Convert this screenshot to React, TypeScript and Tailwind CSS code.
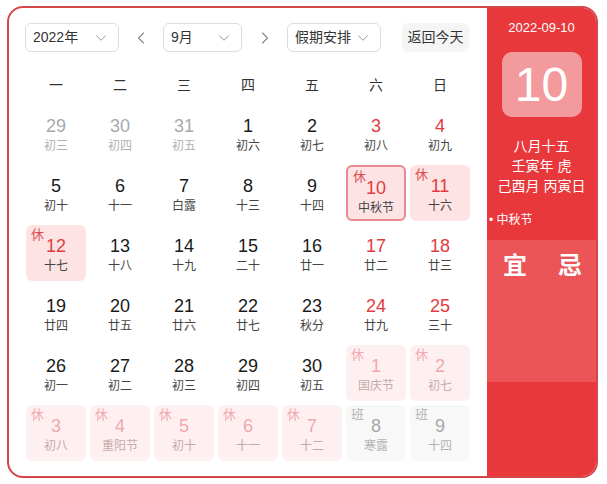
import { ChevronDown, ChevronLeft, ChevronRight } from "lucide-react";

type Kind = "normal" | "prev" | "weekend" | "rest" | "restNext" | "work";

type Day = { n: number; lunar: string; kind: Kind; selected?: boolean };

const WEEK = ["一", "二", "三", "四", "五", "六", "日"];

const DAYS: Day[] = [
  { n: 29, lunar: "初三", kind: "prev" },
  { n: 30, lunar: "初四", kind: "prev" },
  { n: 31, lunar: "初五", kind: "prev" },
  { n: 1, lunar: "初六", kind: "normal" },
  { n: 2, lunar: "初七", kind: "normal" },
  { n: 3, lunar: "初八", kind: "weekend" },
  { n: 4, lunar: "初九", kind: "weekend" },

  { n: 5, lunar: "初十", kind: "normal" },
  { n: 6, lunar: "十一", kind: "normal" },
  { n: 7, lunar: "白露", kind: "normal" },
  { n: 8, lunar: "十三", kind: "normal" },
  { n: 9, lunar: "十四", kind: "normal" },
  { n: 10, lunar: "中秋节", kind: "rest", selected: true },
  { n: 11, lunar: "十六", kind: "rest" },

  { n: 12, lunar: "十七", kind: "rest" },
  { n: 13, lunar: "十八", kind: "normal" },
  { n: 14, lunar: "十九", kind: "normal" },
  { n: 15, lunar: "二十", kind: "normal" },
  { n: 16, lunar: "廿一", kind: "normal" },
  { n: 17, lunar: "廿二", kind: "weekend" },
  { n: 18, lunar: "廿三", kind: "weekend" },

  { n: 19, lunar: "廿四", kind: "normal" },
  { n: 20, lunar: "廿五", kind: "normal" },
  { n: 21, lunar: "廿六", kind: "normal" },
  { n: 22, lunar: "廿七", kind: "normal" },
  { n: 23, lunar: "秋分", kind: "normal" },
  { n: 24, lunar: "廿九", kind: "weekend" },
  { n: 25, lunar: "三十", kind: "weekend" },

  { n: 26, lunar: "初一", kind: "normal" },
  { n: 27, lunar: "初二", kind: "normal" },
  { n: 28, lunar: "初三", kind: "normal" },
  { n: 29, lunar: "初四", kind: "normal" },
  { n: 30, lunar: "初五", kind: "normal" },
  { n: 1, lunar: "国庆节", kind: "restNext" },
  { n: 2, lunar: "初七", kind: "restNext" },

  { n: 3, lunar: "初八", kind: "restNext" },
  { n: 4, lunar: "重阳节", kind: "restNext" },
  { n: 5, lunar: "初十", kind: "restNext" },
  { n: 6, lunar: "十一", kind: "restNext" },
  { n: 7, lunar: "十二", kind: "restNext" },
  { n: 8, lunar: "寒露", kind: "work" },
  { n: 9, lunar: "十四", kind: "work" },
];

function Select({ label, width }: { label: string; width: string }) {
  return (
    <div className={`flex h-[29px] ${width} items-center justify-between rounded-md border border-[#dcdcdc] bg-white pl-[7px] pr-[8px] text-[14px] text-[#333]`}>
      <span>{label}</span>
      <ChevronDown size={18} strokeWidth={1.2} className="text-[#888]" />
    </div>
  );
}

function Cell({ d }: { d: Day }) {
  let box = "";
  let num = "text-[#1a1a1a]";
  let lunar = "text-[#444]";
  let badge: string | null = null;
  let badgeColor = "";

  if (d.kind === "prev") {
    num = "text-[#aaa]";
    lunar = "text-[#b0b0b0]";
  } else if (d.kind === "weekend") {
    num = "text-[#e23b3f]";
  } else if (d.kind === "rest") {
    box = d.selected ? "bg-[#fde3e4] border-2 border-[#e7898d]" : "bg-[#fde3e4]";
    num = "text-[#e23b3f]";
    badge = "休";
    badgeColor = "text-[#e0474b]";
  } else if (d.kind === "restNext") {
    box = "bg-[#fef0f1]";
    num = "text-[#f2a7ad]";
    lunar = "text-[#c6a9ab]";
    badge = "休";
    badgeColor = "text-[#f2a7ad]";
  } else if (d.kind === "work") {
    box = "bg-[#f8f8f8]";
    num = "text-[#a8a8a8]";
    lunar = "text-[#b4b4b4]";
    badge = "班";
    badgeColor = "text-[#b4b4b4]";
  }

  return (
    <div className={`relative flex h-[56px] flex-col items-center rounded-md ${box}`}>
      {badge && (
        <span className={`absolute left-[5px] top-[3px] text-[13px] leading-none ${badgeColor}`}>{badge}</span>
      )}
      <span className={`mt-[10px] text-[18px] leading-[22px] ${num}`}>{d.n}</span>
      <span className={`mt-[1px] text-[12px] leading-[16px] ${lunar}`}>{d.lunar}</span>
    </div>
  );
}

export default function App() {
  return (
    <div
      className="w-[607px] h-[484px] bg-white pl-[7px] pt-[6px]"
      style={{ fontFamily: '"Liberation Sans", "Noto Sans CJK SC", sans-serif' }}
    >
      <div className="flex h-[472px] w-[591px] overflow-hidden rounded-[16px] border-2 border-[#d6474a]">
        <div className="w-[478px] pt-[15px]">
          <div className="flex items-center pl-[16px]">
            <Select label="2022年" width="w-[94px]" />
            <div className="flex w-[44px] justify-center text-[#888]">
              <ChevronLeft size={20} strokeWidth={1.3} />
            </div>
            <Select label="9月" width="w-[79px]" />
            <div className="flex w-[45px] justify-center text-[#888]">
              <ChevronRight size={20} strokeWidth={1.3} />
            </div>
            <Select label="假期安排" width="w-[94px]" />
            <div className="ml-[21px] flex h-[29px] w-[67px] items-center justify-center rounded-md bg-[#f5f5f5] text-[14px] text-[#333]">
              返回今天
            </div>
          </div>

          <div className="mt-[18px] grid grid-cols-[repeat(7,60px)] gap-x-[4px] pl-[17px]">
            {WEEK.map((w) => (
              <div key={w} className="flex h-[30px] items-center justify-center text-[14px] text-[#333]">
                {w}
              </div>
            ))}
          </div>

          <div className="mt-[5px] grid grid-cols-[repeat(7,60px)] gap-x-[4px] gap-y-[4px] pl-[17px]">
            {DAYS.map((d, i) => (
              <Cell key={i} d={d} />
            ))}
          </div>
        </div>

        <div className="flex flex-1 flex-col bg-[#e8383b] text-white">
          <div className="mt-[11px] text-center text-[13px] leading-[18px]">2022-09-10</div>
          <div className="mx-auto mt-[15px] flex h-[65px] w-[80px] items-center justify-center rounded-[10px] bg-[#f39b9c] text-[48px] leading-none">
            10
          </div>
          <div className="mt-[19px] flex flex-col items-center text-[14px] leading-[20px]">
            <span>八月十五</span>
            <span>壬寅年 虎</span>
            <span>己酉月 丙寅日</span>
          </div>
          <div className="mt-[16px] pl-[2px] text-[12px] leading-[16px]">• 中秋节</div>
          <div className="mt-[12px] h-[142px] bg-[#ec5557] pt-[12px]">
            <div className="flex justify-between pl-[16px] pr-[14px] text-[24px] font-bold leading-[28px]">
              <span>宜</span>
              <span>忌</span>
            </div>
          </div>
        </div>
      </div>
    </div>
  );
}
